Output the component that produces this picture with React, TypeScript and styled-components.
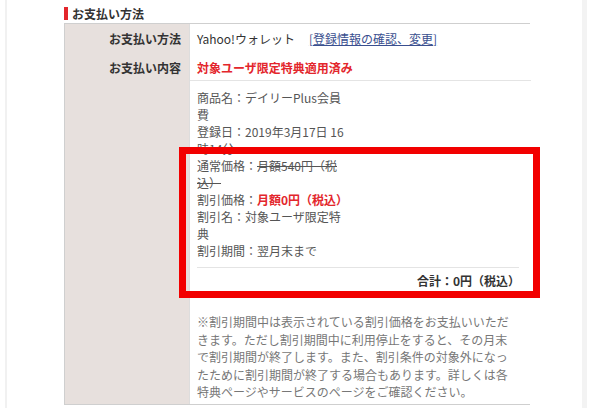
import React from "react";
import styled, { createGlobalStyle } from "styled-components";

const Global = createGlobalStyle`
  html, body { margin: 0; padding: 0; background: #fff; }
  body {
    font-family: "Noto Sans CJK JP", "Noto Sans", "Liberation Sans", sans-serif;
    font-size: 12px;
    color: #333;
  }
`;

const Frame = styled.div`
  position: relative;
  margin-left: 5px;
  width: 582px;
  height: 408px;
  border-left: 2px solid #f1f1f1;
  border-right: 5px solid #f3f3f3;
  padding-left: 57px;
  box-sizing: border-box;
  overflow: hidden;
`;

const Heading = styled.h2`
  display: flex;
  align-items: center;
  gap: 4px;
  margin: 0;
  padding-top: 4px;
  height: 19px;
  font-size: 12px;
  font-weight: bold;
  color: #333;
  line-height: 16px;
`;

const Mark = styled.span`
  display: block;
  width: 4px;
  height: 13px;
  background: #e3262c;
`;

const Table = styled.div`
  display: grid;
  grid-template-columns: 124px 342px;
  border: 1px solid #cfcfcf;
  width: 466px;
  box-sizing: border-box;
`;

const Label = styled.div<{ $pt: number }>`
  background: #e7e0dd;
  font-weight: bold;
  text-align: right;
  padding: ${(p) => p.$pt}px 8px 0 0;
  line-height: 17px;
`;

const Value = styled.div<{ $pt: number; $h?: number }>`
  background: #fff;
  padding: ${(p) => p.$pt}px 0 3px 7px;
  line-height: 17px;
  ${(p) => (p.$h ? `height: ${p.$h}px;` : "")}
  box-sizing: border-box;
  border-left: 1px solid #ddd;
`;

const LinkText = styled.a`
  color: #3a4f8f;
  text-decoration: underline;
  margin-left: 14px;
`;

const Bracket = styled.span`
  color: #3a4f8f;
`;

const RedStrong = styled.div`
  color: #e3262c;
  font-weight: bold;
`;

const Divider = styled.div<{ $mt: number; $ml?: number; $mr?: number }>`
  height: 1px;
  background: #e4e4e4;
  margin: ${(p) => p.$mt}px ${(p) => p.$mr ?? 0}px 0 ${(p) => p.$ml ?? -7}px;
`;

const Details = styled.div`
  width: 180px;
  padding-top: 8px;
  color: #555;
  white-space: nowrap;
`;

const Strike = styled.span`
  text-decoration: line-through;
`;

const RedBold = styled.span`
  color: #e3262c;
  font-weight: bold;
`;

const Total = styled.div`
  text-align: right;
  font-weight: bold;
  padding: 4px 11px 0 0;
`;

const Note = styled.p`
  margin: 24px 12px 0 0;
  color: #777;
  line-height: 17.6px;
`;

const Highlight = styled.div`
  position: absolute;
  left: 172px;
  top: 147px;
  width: 361px;
  height: 151px;
  border: 7px solid #f20000;
  box-sizing: border-box;
  pointer-events: none;
`;

export default function App() {
  return (
    <>
      <Global />
      <Frame>
        <Heading>
          <Mark />
          お支払い方法
        </Heading>
        <Table>
          <Label $pt={6}>お支払い方法</Label>
          <Value $pt={6} $h={30}>
            Yahoo!ウォレット
            <LinkText>
              <Bracket>[</Bracket>登録情報の確認、変更<Bracket>]</Bracket>
            </LinkText>
          </Value>
          <Label $pt={5}>お支払い内容</Label>
          <Value $pt={5}>
            <RedStrong>対象ユーザ限定特典適用済み</RedStrong>
            <Divider $mt={4} />
            <Details>
              <div>
                商品名：デイリーPlus会員
                <br />費
              </div>
              <div>
                登録日：2019年3月17日 16
                <br />
                時14分
              </div>
              <div>
                通常価格：
                <Strike>
                  月額540円（税
                  <br />
                  込）
                </Strike>
              </div>
              <div>
                割引価格：<RedBold>月額0円（税込）</RedBold>
              </div>
              <div>
                割引名：対象ユーザ限定特
                <br />典
              </div>
              <div>割引期間：翌月末まで</div>
            </Details>
            <Divider $mt={8} $ml={0} $mr={12} />
            <Total>合計：0円（税込）</Total>
            <Note>
              ※割引期間中は表示されている割引価格をお支払いいただきます。ただし割引期間中に利用停止をすると、その月末で割引期間が終了します。また、割引条件の対象外になったために割引期間が終了する場合もあります。詳しくは各特典ページやサービスのページをご確認ください。
            </Note>
          </Value>
        </Table>
        <Highlight />
      </Frame>
    </>
  );
}
